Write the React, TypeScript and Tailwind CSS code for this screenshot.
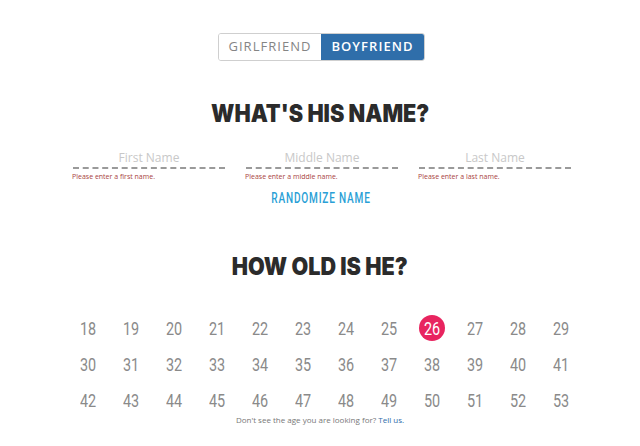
const ages = Array.from({ length: 36 }, (_, i) => 18 + i);

const NameField = ({ label, error }: { label: string; error: string }) => (
  <div className="w-[152px] flex flex-col">
    <div className="h-[21px] border-b-2 border-dashed border-[#9a9a9a] text-center text-[12px] leading-[20px] text-[#c8c8c8]">
      {label}
    </div>
    <div className="mt-[3px] text-[7px] leading-[10px] text-[#a94442] -ml-px">{error}</div>
  </div>
);

const Heading = ({ children }: { children: string }) => (
  <div className="flex justify-center">
    <span className="inline-block scale-x-[0.9] text-[24px] leading-[26px] font-black text-[#2b2b2b] font-['Inter',sans-serif]">
      {children}
    </span>
  </div>
);

const App = () => {
  return (
    <div className="w-[640px] h-[446px] bg-white overflow-hidden font-['Open_Sans',sans-serif]">
      <div className="flex justify-center pt-[33px] pl-[3px]">
        <div className="flex h-[28px] rounded-[3px] border border-[#cfcfcf] overflow-hidden text-[13px] tracking-[0.08em]">
          <div className="w-[102px] flex items-center justify-center text-[#858585] bg-white">
            GIRLFRIEND
          </div>
          <div className="w-[103px] flex items-center justify-center text-white bg-[#2f6eaa] font-semibold">
            BOYFRIEND
          </div>
        </div>
      </div>

      <div className="mt-[40px]">
        <Heading>WHAT'S HIS NAME?</Heading>
      </div>

      <div className="mt-[21px] flex justify-center gap-[21px] pl-[4px]">
        <NameField label="First Name" error="Please enter a first name." />
        <NameField label="Middle Name" error="Please enter a middle name." />
        <NameField label="Last Name" error="Please enter a last name." />
      </div>

      <div className="mt-[8px] flex justify-center pl-[2px]">
        <span className="inline-block scale-x-[0.72] text-[14px] leading-[16px] tracking-[0.08em] text-[#2a9fd6] font-['Roboto',sans-serif] font-medium">
          RANDOMIZE NAME
        </span>
      </div>

      <div className="mt-[48px]">
        <Heading>HOW OLD IS HE?</Heading>
      </div>

      <div className="mt-[35px] grid grid-cols-[repeat(12,43px)] justify-center gap-y-[10px] pl-[9px] font-['Roboto',sans-serif]">
        {ages.map((a) => (
          <div key={a} className="h-[26px] flex items-center justify-center">
            {a === 26 ? (
              <div className="w-[26px] h-[26px] rounded-full bg-[#e8245f] text-white flex items-center justify-center">
                <span className="inline-block scale-x-[0.8] text-[18px]">{a}</span>
              </div>
            ) : (
              <span className="inline-block scale-x-[0.8] text-[18px] text-[#8a8a8a]">{a}</span>
            )}
          </div>
        ))}
      </div>

      <div className="mt-[2px] text-center text-[8px] leading-[10px] text-[#777]">
        Don't see the age you are looking for? <span className="text-[#2f6eaa]">Tell us.</span>
      </div>
    </div>
  );
};

export default App;
